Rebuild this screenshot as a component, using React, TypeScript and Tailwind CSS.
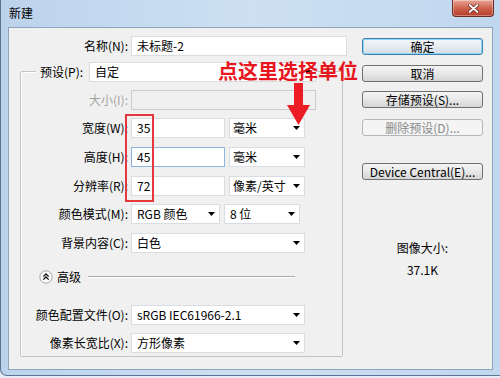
import React from 'react';

const DropArrow = () => (
  <svg width="7" height="4" viewBox="0 0 7 4" className="shrink-0">
    <path d="M0 0h7L3.5 4z" fill="#000" />
  </svg>
);

type BoxProps = {
  w: string;
  text?: string;
  arrow?: boolean;
  focus?: boolean;
  disabled?: boolean;
  pad?: string;
};

function Box({ w, text, arrow, focus, disabled, pad = 'pl-[5px]' }: BoxProps) {
  const border = focus ? 'border-[#8db4dc]' : disabled ? 'border-[#c9cdd2] bg-[#f0f0f0]' : 'border-[#d9dde2] bg-white';
  return (
    <div className={`${w} h-[20px] border ${border} ${focus ? 'bg-white' : ''} flex items-center ${pad} pr-[4px] text-[12px] leading-[18px] text-black`}>
      <span className="flex-1 whitespace-nowrap">{text}</span>
      {arrow && <DropArrow />}
    </div>
  );
}

function Row({ label, mt, children, disabled }: { label: string; mt: string; children: React.ReactNode; disabled?: boolean }) {
  return (
    <div className={`flex items-center ${mt}`}>
      <div className={`w-[107px] text-right text-[12px] leading-[20px] whitespace-nowrap ${disabled ? 'text-[#a3a3a3]' : 'text-black'}`}>{label}</div>
      <div className="ml-[3px] flex gap-[4px]">{children}</div>
    </div>
  );
}

function Btn({ children, mt, primary, disabled }: { children: React.ReactNode; mt: string; primary?: boolean; disabled?: boolean }) {
  let look = 'border-[#707070] bg-gradient-to-b from-[#f4f4f4] via-[#e8e8e8] to-[#d4d4d4] text-black';
  if (primary) look = 'border-[#3c7fb1] bg-gradient-to-b from-[#f2f6f9] via-[#e6ecf0] to-[#d4dde3] text-black shadow-[inset_0_0_0_1px_#8fd6f6]';
  if (disabled) look = 'border-[#b3b7ba] bg-[#f4f4f4] text-[#8a8a8a]';
  return (
    <div className={`${mt} w-[121px] h-[17px] rounded-[3px] border ${look} flex items-center justify-center text-[12px] leading-[15px] whitespace-nowrap`}>
      {children}
    </div>
  );
}

export default function App() {
  return (
    <div className="w-[500px] h-[378px] bg-[#e4ecf5] relative overflow-hidden font-['Noto_Sans_CJK_SC',sans-serif]">
      {/* window frame */}
      <div className="h-[376px] bg-gradient-to-r from-[#bcd3ec] via-[#cde0f3] to-[#c1d7ee] border-l border-b border-[#5a7594] rounded-bl-[7px]">
        {/* title bar */}
        <div className="h-[27px] flex items-start justify-between">
          <div className="pl-[8px] pt-[5px] text-[12px] leading-[16px] text-black">新建</div>
          <div className="mr-[6px] w-[42px] h-[17px] rounded-b-[4px] border border-t-0 border-[#6e2a22] bg-gradient-to-b from-[#e8a596] via-[#cf6350] to-[#b73a2a] flex items-center justify-center shadow-[inset_0_0_0_1px_rgba(255,255,255,0.35)]">
            <svg width="11" height="9" viewBox="0 0 11 9">
              <path d="M1.5 1L9.5 8M9.5 1L1.5 8" stroke="#5b1f18" strokeWidth="3.2" strokeLinecap="round" />
              <path d="M1.5 1L9.5 8M9.5 1L1.5 8" stroke="#fff" strokeWidth="1.8" strokeLinecap="round" />
            </svg>
          </div>
        </div>

        {/* client area */}
        <div className="ml-[7px] w-[485px] h-[343px] border border-[#8ea4bd] bg-[#f0f0f0] flex">
          {/* left column */}
          <div className="w-[338px]">
            <div className="mt-[8px] flex items-center">
              <div className="w-[119px] text-right text-[12px] leading-[20px]">名称(N):</div>
              <div className="ml-[3px]">
                <Box w="w-[216px]" text="未标题-2" />
              </div>
            </div>

            {/* group box */}
            <div className="ml-[11px] mt-[15px] w-[323px] h-[286px] border border-[#c4c4c4] rounded-[2px] shadow-[inset_1px_1px_0_#fff]">
              <div className="-mt-[10px] ml-[15px] flex items-center">
                <div className="flex items-center bg-[#f0f0f0] pl-[4px]">
                  <div className="w-[49px] text-[12px] leading-[20px]">预设(P):</div>
                  <Box w="w-[227px]" text="自定" arrow />
                </div>
              </div>

              <Row label="大小(I):" mt="mt-[8px]" disabled>
                <Box w="w-[185px]" disabled />
              </Row>
              <Row label="宽度(W):" mt="mt-[8px]">
                <Box w="w-[94px]" text="35" />
                <Box w="w-[76px]" text="毫米" arrow pad="pl-[3px]" />
              </Row>
              <Row label="高度(H):" mt="mt-[9px]">
                <Box w="w-[94px]" text="45" focus />
                <Box w="w-[76px]" text="毫米" arrow pad="pl-[3px]" />
              </Row>
              <Row label="分辨率(R):" mt="mt-[9px]">
                <Box w="w-[94px]" text="72" />
                <Box w="w-[76px]" text="像素/英寸" arrow pad="pl-[3px]" />
              </Row>
              <Row label="颜色模式(M):" mt="mt-[8px]">
                <Box w="w-[89px]" text="RGB 颜色" arrow />
                <Box w="w-[76px]" text="8 位" arrow pad="pl-[5px]" />
              </Row>
              <Row label="背景内容(C):" mt="mt-[9px]">
                <Box w="w-[174px]" text="白色" arrow />
              </Row>

              {/* advanced toggle */}
              <div className="mt-[14px] h-[20px] flex items-center pl-[18px]">
                <svg width="14" height="14" viewBox="0 0 14 14" className="shrink-0">
                  <circle cx="7" cy="7" r="6.2" fill="#fbfbfb" stroke="#a6a6a6" strokeWidth="1" />
                  <path d="M4.3 6.6L7 4l2.7 2.6M4.3 9.6L7 7l2.7 2.6" fill="none" stroke="#111" strokeWidth="1.3" />
                </svg>
                <span className="ml-[4px] text-[12px] leading-[20px]">高级</span>
                <div className="ml-[7px] w-[207px] h-[2px] border-t border-[#a9a9a9] border-b border-b-white" />
              </div>

              <Row label="颜色配置文件(O):" mt="mt-[18px]">
                <Box w="w-[174px]" text="sRGB IEC61966-2.1" arrow />
              </Row>
              <Row label="像素长宽比(X):" mt="mt-[8px]">
                <Box w="w-[174px]" text="方形像素" arrow />
              </Row>
            </div>
          </div>

          {/* right column */}
          <div className="ml-[15px] w-[121px] flex flex-col">
            <Btn mt="mt-[10px]" primary>确定</Btn>
            <Btn mt="mt-[10px]">取消</Btn>
            <Btn mt="mt-[9px]">存储预设(S)...</Btn>
            <Btn mt="mt-[11px]" disabled>删除预设(D)...</Btn>
            <Btn mt="mt-[27px]">Device Central(E)...</Btn>
            <div className="mt-[58px] text-center text-[12px] leading-[20px]">图像大小:</div>
            <div className="mt-[2px] text-center text-[12px] leading-[20px]">37.1K</div>
          </div>
        </div>
      </div>

      {/* annotation overlay */}
      <div className="absolute left-[125px] top-[114px] w-[29px] h-[88px] border-2 border-[#e3383d]" />
      <div className="absolute left-[218px] top-[59px] text-[20px] leading-[24px] font-bold text-[#e8161e] whitespace-nowrap">点这里选择单位</div>
      <svg className="absolute left-[287px] top-[83px]" width="23" height="42" viewBox="0 0 23 42">
        <rect x="7" y="0" width="9" height="24" fill="#ec1c24" />
        <path d="M0 22h23L11.5 42z" fill="#ec1c24" />
      </svg>
    </div>
  );
}
